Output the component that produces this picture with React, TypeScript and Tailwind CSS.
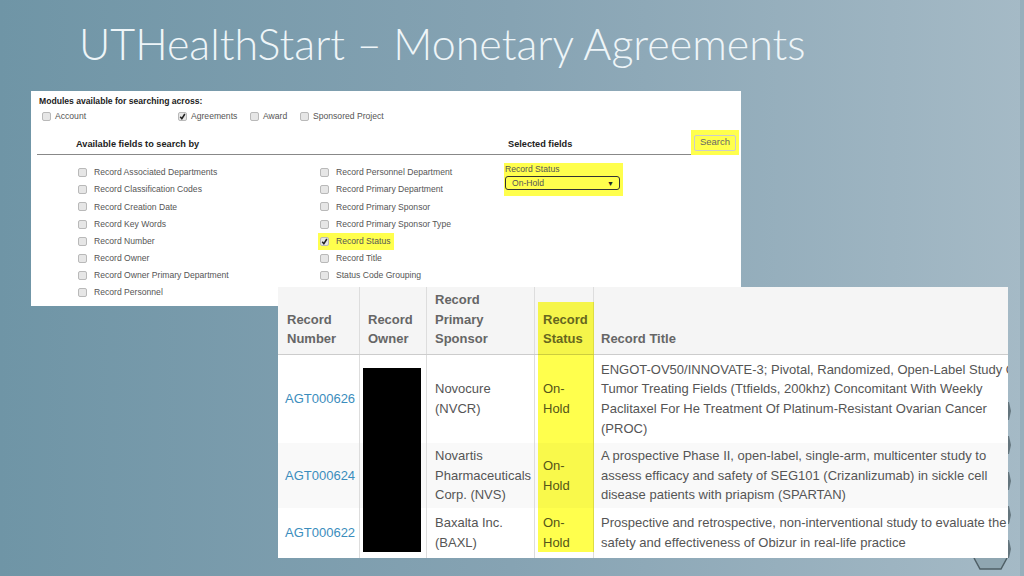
const sans = "font-['Liberation_Sans',Arial,sans-serif]";

const LEFT_FIELDS = [
  "Record Associated Departments",
  "Record Classification Codes",
  "Record Creation Date",
  "Record Key Words",
  "Record Number",
  "Record Owner",
  "Record Owner Primary Department",
  "Record Personnel",
];

const RIGHT_FIELDS = [
  "Record Personnel Department",
  "Record Primary Department",
  "Record Primary Sponsor",
  "Record Primary Sponsor Type",
  "Record Status",
  "Record Title",
  "Status Code Grouping",
];

const ROWS = [
  {
    id: "AGT000626",
    sponsor: ["Novocure", "(NVCR)"],
    title: [
      "ENGOT-OV50/INNOVATE-3; Pivotal, Randomized, Open-Label Study Of",
      "Tumor Treating Fields (Ttfields, 200khz) Concomitant With Weekly",
      "Paclitaxel For He Treatment Of Platinum-Resistant Ovarian Cancer",
      "(PROC)",
    ],
    rowClass: "h-[88px] bg-white",
  },
  {
    id: "AGT000624",
    sponsor: ["Novartis", "Pharmaceuticals", "Corp. (NVS)"],
    title: [
      "A prospective Phase II, open-label, single-arm, multicenter study to",
      "assess efficacy and safety of SEG101 (Crizanlizumab) in sickle cell",
      "disease patients with priapism (SPARTAN)",
    ],
    rowClass: "h-[65px] bg-[#f9f9f9]",
  },
  {
    id: "AGT000622",
    sponsor: ["Baxalta Inc.", "(BAXL)"],
    title: [
      "Prospective and retrospective, non-interventional study to evaluate the",
      "safety and effectiveness of Obizur in real-life practice",
    ],
    rowClass: "h-[50px] bg-white",
  },
];

function Box({ checked }: { checked?: boolean }) {
  return (
    <span className="relative block h-[9px] w-[9px] shrink-0 rounded-[2px] border border-[#b9b9b9] bg-[#e6e6e6]">
      {checked && (
        <svg viewBox="0 0 10 10" className="absolute -left-px -top-px h-[9px] w-[9px]">
          <path d="M2.5 5.2 L4.3 7.4 L7.6 2.2" fill="none" stroke="#222" strokeWidth="1.7" />
        </svg>
      )}
    </span>
  );
}

function Field({ label, checked }: { label: string; checked?: boolean }) {
  return (
    <div className="flex h-[17.2px] items-center">
      <Box checked={checked} />
      <span className="ml-[7px] whitespace-nowrap">{label}</span>
    </div>
  );
}

function SearchPanel() {
  return (
    <div className={`absolute left-[31px] top-[91px] h-[215px] w-[710px] overflow-hidden bg-white text-[8.6px] text-[#555] ${sans}`}>
      <div className="pl-2 pt-1 text-[8.6px] font-bold leading-[12px] text-[#222]">
        Modules available for searching across:
      </div>
      <div className="mt-[3px] flex h-[13px] items-center pl-[11px]">
        <Box />
        <span className="ml-[4px] w-[123px]">Account</span>
        <Box checked />
        <span className="ml-[4px] w-[59px]">Agreements</span>
        <Box />
        <span className="ml-[4px] w-[37px]">Award</span>
        <Box />
        <span className="ml-[4px]">Sponsored Project</span>
      </div>
      <div className="relative ml-[6px] mr-[6px] mt-[10px] flex h-[22px] items-end border-b-[1.5px] border-[#888] pb-[4px] text-[9.2px] font-bold leading-[12px] text-[#222]">
        <span className="ml-[39px] w-[432px]">Available fields to search by</span>
        <span>Selected fields</span>
      </div>
      <div className="flex pt-[9px]">
        <div className="ml-[47px] w-[242px]">
          {LEFT_FIELDS.map((f) => (
            <Field key={f} label={f} />
          ))}
        </div>
        <div className="w-[184px]">
          {RIGHT_FIELDS.map((f) => (
            <div key={f} className={f === "Record Status" ? "-ml-[2px] w-[76px] bg-[#ffff4d] pl-[2px]" : ""}>
              <Field label={f} checked={f === "Record Status"} />
            </div>
          ))}
        </div>
        <div className="-mt-[1px] h-[33px] w-[119px] self-start bg-[#ffff4d] px-[1px] pt-[1px] text-[8.6px] leading-[11px]">
          <div>Record Status</div>
          <div className="mt-[1px] flex h-[14px] w-[115px] items-center justify-between rounded-[3px] border border-[#333] pl-[6px] pr-[5px]">
            <span>On-Hold</span>
            <span className="text-[7px] text-[#222]">▼</span>
          </div>
        </div>
      </div>
      {/* search button sits over the heading rule */}
      <div className="absolute left-[660px] top-[39px] flex h-[25px] w-[48px] items-center justify-center bg-[#ffff4d]">
        <div className="flex h-[16px] w-[42px] items-center justify-center rounded-[2px] border border-[#ccc] text-[9.5px] text-[#666]">
          Search
        </div>
      </div>
    </div>
  );
}

function ResultsPanel() {
  return (
    <div className={`absolute left-[278px] top-[287px] h-[271px] w-[730px] overflow-hidden bg-white text-[13px] leading-[19.6px] text-[#555] ${sans}`}>
      <div className="grid h-[68px] grid-cols-[82px_67px_108px_59px_1fr] border-b-[1.5px] border-[#ccc] bg-[#f5f5f5] font-bold text-[#666]">
        <div className="flex flex-col justify-end border-r border-[#ddd] pb-[5px] pl-[9px]">
          <div>Record</div>
          <div>Number</div>
        </div>
        <div className="flex flex-col justify-end border-r border-[#ddd] pb-[5px] pl-[8px]">
          <div>Record</div>
          <div>Owner</div>
        </div>
        <div className="flex flex-col justify-end border-r border-[#ddd] pb-[5px] pl-[8px]">
          <div>Record</div>
          <div>Primary</div>
          <div>Sponsor</div>
        </div>
        <div className="flex flex-col justify-end border-r border-[#ddd] pb-[5px] pl-[8px]">
          <div>Record</div>
          <div>Status</div>
        </div>
        <div className="flex flex-col justify-end pb-[5px] pl-[7px]">Record Title</div>
      </div>
      {ROWS.map((r) => (
        <div key={r.id} className={`grid grid-cols-[82px_67px_108px_59px_1fr] ${r.rowClass}`}>
          <div className="flex items-center border-r border-[#ddd] pl-[7px] text-[#3b8dbd]">{r.id}</div>
          <div className="border-r border-[#ddd]" />
          <div className="flex flex-col justify-center border-r border-[#ddd] pl-[8px]">
            {r.sponsor.map((s) => (
              <div key={s} className="whitespace-nowrap">{s}</div>
            ))}
          </div>
          <div className="flex flex-col justify-center border-r border-[#ddd] pl-[8px]">
            <div>On-</div>
            <div>Hold</div>
          </div>
          <div className="flex flex-col justify-center pl-[7px]">
            {r.title.map((t) => (
              <div key={t} className="whitespace-nowrap">{t}</div>
            ))}
          </div>
        </div>
      ))}
      {/* redaction and highlight painted over the table */}
      <div className="absolute left-[85px] top-[81px] h-[184px] w-[58px] bg-black" />
      <div className="absolute left-[260px] top-[15px] h-[250px] w-[56px] bg-[#ffff00] opacity-70 mix-blend-multiply" />
    </div>
  );
}

function Decoration() {
  return (
    <svg viewBox="0 0 1024 576" className="absolute inset-0 h-full w-full">
      <rect x="1020" y="0" width="4" height="576" fill="#7f9aa8" opacity="0.35" />
      <g fill="#4f5f66" opacity="0.75">
        <path d="M1004 402 h5 l2 9 l-2 9 h-5 z" />
        <path d="M1004 436 h5 l2 9 l-2 9 h-5 z" />
        <path d="M1004 472 h5 l2 9 l-2 9 h-5 z" />
        <path d="M1004 506 h5 l2 9 l-2 9 h-5 z" />
        <path d="M1004 540 h5 l2 9 l-2 9 h-5 z" />
      </g>
      <path d="M974 558 L980 569 H1001 L1007 558" fill="#8fa6b1" stroke="#4f5f66" strokeWidth="1.5" />
    </svg>
  );
}

export default function App() {
  return (
    <div className="relative h-[576px] w-[1024px] overflow-hidden bg-gradient-to-r from-[#6f95a6] via-[#86a3b3] to-[#a5bac6]">
      <Decoration />
      <h1 className="absolute left-[79px] top-[17px] whitespace-nowrap font-['Lato',sans-serif] text-[43px] font-light leading-[54px] text-[#eef5f8]">
        UTHealthStart – Monetary Agreements
      </h1>
      <div className="blur-[0.4px]">
        <SearchPanel />
        <ResultsPanel />
      </div>
    </div>
  );
}
